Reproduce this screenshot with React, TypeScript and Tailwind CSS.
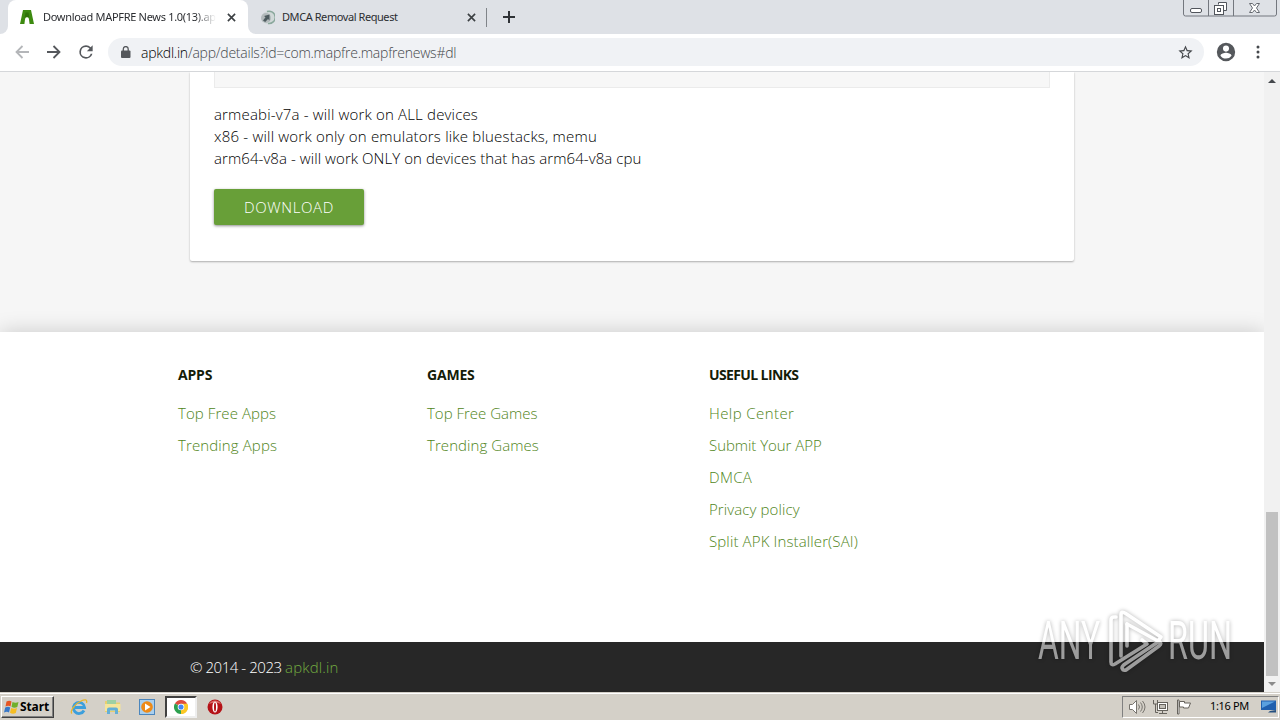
import type { ReactNode } from "react";
import clsx from "clsx";

const columns = [
  {
    title: "APPS",
    width: "w-[249px]",
    titleTracking: "tracking-[-0.2px]",
    links: [
      { label: "Top Free Apps", tracking: "tracking-[0.08px]" },
      { label: "Trending Apps", tracking: "tracking-[0.12px]" },
    ],
  },
  {
    title: "GAMES",
    width: "w-[282px]",
    titleTracking: "tracking-[-0.2px]",
    links: [
      { label: "Top Free Games", tracking: "tracking-[0px]" },
      { label: "Trending Games", tracking: "tracking-[0.07px]" },
    ],
  },
  {
    title: "USEFUL LINKS",
    width: "w-[300px]",
    titleTracking: "tracking-[-0.62px]",
    links: [
      { label: "Help Center", tracking: "tracking-[0.42px]" },
      { label: "Submit Your APP", tracking: "tracking-[-0.05px]" },
      { label: "DMCA", tracking: "tracking-[0.3px]" },
      { label: "Privacy policy", tracking: "tracking-[0.1px]" },
      { label: "Split APK Installer(SAI)", tracking: "tracking-[0.13px]" },
    ],
  },
];

function CloseIcon() {
  return (
    <svg width="9" height="9" viewBox="0 0 10 10" stroke="#3c4043" strokeWidth="1.8">
      <path d="M1 1l8 8M9 1L1 9" />
    </svg>
  );
}

function TabStrip() {
  return (
    <div className="relative flex h-[34px] bg-[#dee1e6] text-[11px] text-[#2b2d31]">
      <div className="flex w-2 shrink-0 items-end bg-white">
        <div className="h-full w-full rounded-br-lg bg-[#dee1e6]" />
      </div>
      <div className="flex h-full w-[240px] items-center rounded-t-lg bg-white pl-3 pr-[12px]">
        <svg width="14" height="16" viewBox="0 0 14 16" className="shrink-0">
          <path d="M3 1h8l3 14H9.600l-.6-4.500a2 2 0 0 0-4 0L4.400 15H0z" fill="#3d8a10" />
          <path d="M5 10q2-2.500 4 0l-.4-1.200a2 2 0 0 0-3.200 0z" fill="#dff0cf" />
          <path d="M4.600 9L5.500 3.500h3L9.400 9q-2.400-2-4.800 0z" fill="#2f7308" />
        </svg>
        <span className="ml-[9px] whitespace-nowrap tracking-[-0.3px] [mask-image:linear-gradient(to_right,black_88%,transparent)]">
          Download MAPFRE News 1.0(13).ap
        </span>
        <span className="ml-auto">
          <CloseIcon />
        </span>
      </div>
      <div className="flex w-2 shrink-0 bg-white">
        <div className="h-full w-full rounded-bl-lg bg-[#dee1e6]" />
      </div>
      <div className="flex h-full w-[230px] items-center pl-1 pr-[10px]">
        <svg width="15" height="15" viewBox="0 0 15 15" className="shrink-0">
          <circle cx="8" cy="7.500" r="6.300" fill="#d0d8d8" />
          <circle cx="6" cy="8" r="5" fill="#b3babc" />
          <path d="M9.500 4.500L4 6l1.500 1.200L3 10.500 5.200 12 8 9l1.500 1.500z" fill="#4d5b5f" />
          <path d="M7 1.500a6.200 6.200 0 1 1 1 12" fill="none" stroke="#8aa89c" strokeWidth="1.500" />
        </svg>
        <span className="ml-[7px] whitespace-nowrap tracking-[-0.43px]">DMCA Removal Request</span>
        <span className="ml-auto">
          <CloseIcon />
        </span>
      </div>
      <div className="mt-[8px] h-[19px] w-px shrink-0 bg-[#808489]" />
      <svg className="ml-[16px] mt-[11px]" width="12" height="12" viewBox="0 0 12 12" stroke="#2f3236" strokeWidth="2">
        <path d="M6 0v12M0 6h12" />
      </svg>
      <svg className="ml-auto mr-[3px]" width="94" height="17" viewBox="0 0 94 17" fill="none" stroke="#73777e">
        <path d="M.5 0v14a2 2 0 0 0 2 2h89a2 2 0 0 0 2-2V0M25.500 0v16M50.500 0v16" />
        <rect x="7.500" y="8.500" width="11" height="4" rx="1.500" fill="#fff" stroke="#51555c" />
        <path d="M35.500 4.500v-2h8v8h-2.500" stroke="#51555c" fill="#fff" />
        <rect x="31.500" y="5.500" width="9" height="9" fill="#fff" stroke="#51555c" />
        <rect x="34.500" y="8.500" width="3" height="3" stroke="#51555c" />
        <path
          d="M66.500 3.500h3l2 2.500 2-2.500h3L73.500 8l3 4.500h-3l-2-2.500-2 2.500h-3l3-4.500z"
          fill="#fff"
          stroke="#666a71"
        />
      </svg>
    </div>
  );
}

function Toolbar() {
  return (
    <div className="flex h-[38px] items-center border-b border-[#d5d7da] bg-white pb-px">
      <svg className="ml-[15px]" width="14" height="14" viewBox="0 0 14 14" fill="none" stroke="#b4b6b9" strokeWidth="1.800">
        <path d="M14 7H1.500M7.500 1L1.500 7l6 6" />
      </svg>
      <svg className="ml-[18px]" width="14" height="14" viewBox="0 0 14 14" fill="none" stroke="#55585c" strokeWidth="1.800">
        <path d="M0 7h12.500M6.500 1l6 6-6 6" />
      </svg>
      <svg className="ml-[15px]" width="20" height="20" viewBox="0 0 24 24" fill="#55585c">
        <path d="M17.650 6.350A7.960 7.960 0 0 0 12 4a8 8 0 1 0 7.730 10h-2.080A6 6 0 1 1 12 6c1.660 0 3.140.69 4.220 1.780L13 11h7V4z" />
      </svg>
      <div className="ml-[12px] flex h-[28px] w-[1096px] items-center rounded-full bg-[#f0f2f5] pl-[13px] pr-[10px]">
        <svg width="10" height="12" viewBox="0 0 10 12" fill="#55585c">
          <rect x="0" y="4.500" width="9.500" height="7.500" rx="1" />
          <path d="M2.300 5V3a2.450 2.450 0 0 1 4.900 0v2" fill="none" stroke="#55585c" strokeWidth="1.300" />
        </svg>
        <span className="ml-[10px] whitespace-nowrap font-['Open_Sans'] text-[14px] font-light tracking-[-0.24px] text-[#45484c]">
          <span className="text-black">apkdl.in</span>/app/details?id=com.mapfre.mapfrenews#dl
        </span>
        <svg className="ml-auto" width="17" height="17" viewBox="0 0 24 24" fill="#45484c">
          <path d="M22 9.240l-7.190-.62L12 2 9.190 8.630 2 9.240l5.460 4.730L5.820 21 12 17.270 18.180 21l-1.630-7.030zM12 15.400l-3.760 2.270 1-4.280-3.320-2.880 4.380-.38L12 6.100l1.710 4.040 4.380.38-3.320 2.880 1 4.280z" />
        </svg>
      </div>
      <svg className="ml-[11px]" width="22" height="22" viewBox="0 0 24 24" fill="#55585c">
        <path d="M12 2a10 10 0 1 0 0 20 10 10 0 0 0 0-20zm0 3a3.300 3.300 0 1 1 0 6.600A3.300 3.300 0 0 1 12 5zm0 14.200a7.200 7.200 0 0 1-6-3.220c.03-1.990 4-3.080 6-3.080s5.970 1.090 6 3.080a7.200 7.200 0 0 1-6 3.220z" />
      </svg>
      <svg className="ml-[19px]" width="4" height="14" viewBox="0 0 4 14" fill="#45484c">
        <circle cx="2" cy="2" r="1.500" />
        <circle cx="2" cy="7" r="1.500" />
        <circle cx="2" cy="12" r="1.500" />
      </svg>
    </div>
  );
}

function DownloadCard() {
  return (
    <div className="mx-[190px] h-[189px] w-[884px] rounded-b-[2px] bg-white px-6 shadow-[0_1px_2px_rgba(0,0,0,0.3)]">
      <div className="h-4 border border-t-0 border-[#ebebeb] bg-[#f7f7f7]" />
      <div className="mt-[15px] whitespace-nowrap text-[15px] leading-[22px] text-black">
        <p className="tracking-[0.17px]">armeabi-v7a - will work on ALL devices</p>
        <p className="tracking-[0.2px]">x86 - will work only on emulators like bluestacks, memu</p>
        <p className="tracking-[0.07px]">arm64-v8a - will work ONLY on devices that has arm64-v8a cpu</p>
      </div>
      <button className="mt-[20px] flex h-9 w-[150px] items-center justify-center rounded-[2px] bg-[#689f38] text-[15px] tracking-[0.6px] text-white shadow-[0_1px_3px_rgba(0,0,0,0.45)]">
        DOWNLOAD
      </button>
    </div>
  );
}

function Footer() {
  return (
    <footer>
      <div className="flex h-[310px] bg-white pl-[178px] pt-[33px] shadow-[0_0_20px_rgba(0,0,0,0.18)]">
        {columns.map((column) => (
          <div key={column.title} className={column.width}>
            <h5 className={clsx("text-[14px] font-bold leading-5 text-[#141c08]", column.titleTracking)}>
              {column.title}
            </h5>
            <ul className="mt-[12px] text-[15px] leading-8 text-[#4f8520]">
              {column.links.map((link) => (
                <li key={link.label}>
                  <a className={clsx("whitespace-nowrap", link.tracking)}>{link.label}</a>
                </li>
              ))}
            </ul>
          </div>
        ))}
      </div>
      <div className="relative flex h-[50px] items-center bg-[#272727] pl-[190px] text-[15px] tracking-[-0.45px] text-white">
        © 2014 - 2023&nbsp;<a className="tracking-[0.15px] text-[#72ac40]">apkdl.in</a>
      </div>
    </footer>
  );
}

function Scrollbar() {
  return (
    <div className="flex w-4 flex-col items-center bg-[#f1f1f1]">
      <svg width="8" height="4" viewBox="0 0 8 4" className="mt-[7px]" fill="#45484c">
        <path d="M0 4l4-4 4 4z" />
      </svg>
      <div className="mt-[429px] h-[164px] w-3 bg-[#c1c1c1]" />
      <svg width="8" height="4" viewBox="0 0 8 4" className="mt-[6px]" fill="#8b8b8b">
        <path d="M0 0l4 4 4-4z" />
      </svg>
    </div>
  );
}

function Watermark() {
  return (
    <div className="pointer-events-none absolute left-[1038px] top-[606px] h-[70px] w-[196px] font-[Roboto] text-[53px] font-normal leading-[70px] text-white opacity-55 [filter:drop-shadow(0_0_2px_rgba(0,0,0,0.55))]">
      <span className="absolute left-0 top-0 origin-left scale-x-[0.6]">ANY</span>
      <svg className="absolute left-[70px] top-[2px]" width="58" height="66" viewBox="0 0 58 66" fill="none" stroke="#fff" strokeWidth="3.600" strokeLinejoin="round" strokeLinecap="round">
        <path d="M8 9H6q-3 0-3 3v42q0 4 4 2l32-20-5-4" />
        <path d="M13 48V6q0-3 4-1l36 24-3 4-31-17" />
        <path d="M19 16v22" />
        <path d="M50 33q5 2 1 5L18 62q-3 1-4-2 0-2 3-4l33-22" />
      </svg>
      <span className="absolute left-[130px] top-0 origin-left scale-x-[0.61]">RUN</span>
    </div>
  );
}

function TaskButton({ children, active }: { children: ReactNode; active?: boolean }) {
  return (
    <div
      className={clsx(
        "flex h-[22px] w-[32px] items-center justify-center",
        active && "border-2 border-b-[#eee] border-l-[#404040] border-r-[#eee] border-t-[#404040] bg-white",
      )}
    >
      {children}
    </div>
  );
}

function Taskbar() {
  return (
    <div className="flex h-[28px] items-center border-t border-[#d4d0c8] bg-[#d4d0c8] shadow-[inset_0_1px_0_#fff]">
      <div className="ml-px flex h-[22px] w-[53px] items-center border border-b-[#404040] border-l-white border-r-[#404040] border-t-white pl-[1px] shadow-[inset_-1px_-1px_0_#808080]">
        <svg width="17" height="16" viewBox="0 0 16 16" className="shrink-0">
          <path d="M3 2.500q3-1.500 5 0L7 7.500q-2-1.500-5 0z" fill="#e65522" />
          <path d="M9 3q3 1.500 6 0l-1.200 5q-3 1.500-5.800-.2z" fill="#6faf2c" />
          <path d="M1.700 8.500q3-1.500 5 0L5.500 13.500q-2-1.500-5 0z" fill="#3878c8" />
          <path d="M7.700 9q3 1.500 5.800 0l-1.200 5q-3 1.500-5.800-.2z" fill="#f5bd22" />
        </svg>
        <span className="font-['Noto_Sans'] text-[12px] font-bold leading-none tracking-[-0.1px] text-black">Start</span>
      </div>
      <div className="ml-[9px] flex gap-[2px]">
        <TaskButton>
          <svg width="18" height="18" viewBox="0 0 18 18" fill="none">
            <path d="M14 12.500A5.600 5.600 0 1 1 14.600 9.500H5" stroke="#3c9fdc" strokeWidth="2.800" />
            <path d="M2 15.500C-.5 14 4 6 11 3c4-2 6.500-1.500 5.500 2" stroke="#e8b62c" strokeWidth="1.300" />
          </svg>
        </TaskButton>
        <TaskButton>
          <svg width="18" height="16" viewBox="0 0 18 16">
            <path d="M1 2h6l1 1.500h8V13H1z" fill="#e8cf6f" />
            <path d="M3 1h9v6H3z" fill="#9ed0a3" />
            <path d="M1 5h15.500v7H1z" fill="#f5e59b" />
            <path d="M3 15V10.500q0-2 2-2h7q2 0 2 2V15h-3v-3.500H6V15z" fill="#65afd6" />
          </svg>
        </TaskButton>
        <TaskButton>
          <svg width="16" height="16" viewBox="0 0 16 16">
            <rect x=".5" y=".5" width="15" height="15" fill="#a9cfee" stroke="#4b86bd" />
            <circle cx="8" cy="8" r="5.800" fill="#ee8a17" />
            <path d="M6 4.500l5.500 3.500L6 11.500z" fill="#fff" />
          </svg>
        </TaskButton>
        <TaskButton active>
          <svg width="14" height="14" viewBox="0 0 16 16" className="shrink-0">
            <path d="M8 8L1.070 4A8 8 0 0 1 14.930 4z" fill="#dd4b3e" />
            <path d="M8 8l6.930-4A8 8 0 0 1 8 16z" fill="#fbc725" />
            <path d="M8 8v8A8 8 0 0 1 1.070 4z" fill="#2ca04f" />
            <path d="M8 4.300h7.100A8 8 0 0 1 8 16l3.300-6z" fill="#fbc725" />
            <circle cx="8" cy="8" r="3.800" fill="#fff" />
            <circle cx="8" cy="8" r="2.900" fill="#4285f4" />
          </svg>
        </TaskButton>
        <TaskButton>
          <svg width="16" height="16" viewBox="0 0 16 16">
            <circle cx="8" cy="8" r="7.500" fill="#b51217" />
            <path d="M2 5a7 7 0 0 1 12 0q-6-3-12 0z" fill="#dc6a68" />
            <ellipse cx="8" cy="8" rx="2.600" ry="5.500" fill="#fff" />
            <ellipse cx="8" cy="8" rx="1" ry="4.500" fill="#b51217" />
          </svg>
        </TaskButton>
      </div>
      <div className="ml-auto mr-px flex h-[22px] w-[157px] items-center border border-b-white border-l-[#808080] border-r-white border-t-[#808080] pl-[5px]">
        <svg width="18" height="16" viewBox="0 0 18 16" fill="none" stroke="#77746e">
          <path d="M1.500 5.500h3l4-4v13l-4-4h-3z" fill="#fff" />
          <path d="M10.500 5.500q2 2.500 0 5M12.500 3.500q3.500 4.500 0 9M14.500 2q5 6 0 12" />
        </svg>
        <svg width="17" height="16" viewBox="0 0 17 16" className="ml-[6px]" fill="none" stroke="#66635d">
          <rect x="5.500" y="3.500" width="10" height="8" fill="#fff" />
          <rect x="7.500" y="5.500" width="6" height="4" fill="#c3c0b9" />
          <path d="M7 14.500h8M10.500 11.500v3M1.500 1v4h4V1M3.500 5v8.500H6" />
        </svg>
        <svg width="16" height="16" viewBox="0 0 16 16" className="ml-[7px]" stroke="#66635d" fill="#fff">
          <path d="M1.500 1v14h1.500V1z" />
          <path d="M3.500 2.500h5v1.500h6L12.500 9h-5V8h-4z" />
        </svg>
        <span className="ml-[18px] whitespace-nowrap text-[11px] tracking-[-0.35px] text-black">1:16 PM</span>
        <svg width="16" height="15" viewBox="0 0 16 15" className="ml-auto mr-px">
          <path d="M0 1.500h15v9.500H0z" fill="#205fae" />
          <path d="M1 2.500h13L1 9z" fill="#5aa0df" />
          <path d="M9 12l6-1v2.500H7z" fill="#26507f" />
        </svg>
      </div>
    </div>
  );
}

export default function App() {
  return (
    <div className="relative flex h-[720px] w-[1280px] flex-col overflow-hidden bg-white font-['Noto_Sans',sans-serif]">
      <TabStrip />
      <Toolbar />
      <div className="flex h-[620px]">
        <main className="w-[1264px] overflow-hidden bg-[#f6f6f6] font-['Open_Sans','Noto_Sans',sans-serif] font-light">
          <DownloadCard />
          <div className="h-[71px]" />
          <Footer />
        </main>
        <Scrollbar />
      </div>
      <Taskbar />
      <Watermark />
    </div>
  );
}
